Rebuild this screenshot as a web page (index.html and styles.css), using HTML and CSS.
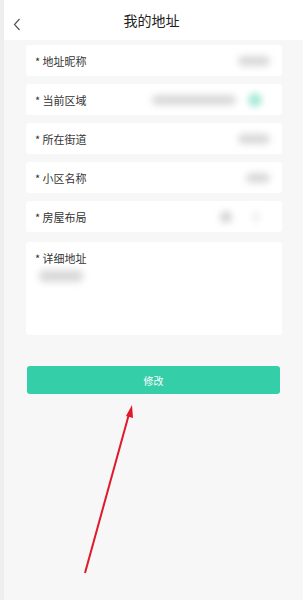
FILE: index.html
```html
<!DOCTYPE html>
<html lang="zh">
 <head>
  <meta charset="utf-8">
  <title>我的地址</title>
  <link rel="stylesheet" href="styles.css">
 </head>
 <body>
  <div id="page">
   <div id="topbar">
    <span class="back">
     <svg width="8" height="13" viewBox="0 0 8 13"><path d="M6.5 1 L1.5 6.5 L6.5 12" fill="none" stroke="#555" stroke-width="1.2"/></svg>
    </span>
    <span class="title">我的地址</span>
   </div>

   <form id="address">
    <div class="row">
     <span class="label">* 地址昵称</span>
     <span class="blob" style="width:32px"></span>
    </div>
    <div class="row">
     <span class="label">* 当前区域</span>
     <span class="blob" style="width:84px"></span>
     <span class="dot"></span>
    </div>
    <div class="row">
     <span class="label">* 所在街道</span>
     <span class="blob" style="width:32px"></span>
    </div>
    <div class="row">
     <span class="label">* 小区名称</span>
     <span class="blob" style="width:24px"></span>
    </div>
    <div class="row layout">
     <span class="label">* 房屋布局</span>
     <span class="blob round"></span>
     <span class="blob faint" style="width:8px"></span>
    </div>
    <div class="row detail">
     <span class="label">* 详细地址</span>
     <span class="blob left" style="width:44px"></span>
    </div>
    <input type="button" class="submit" value="修改">
   </form>

   <svg class="arrow" width="303" height="600" viewBox="0 0 303 600">
    <line x1="85" y1="573" x2="129" y2="414" stroke="#e0182a" stroke-width="2"/>
    <polygon points="132,405 126,416 133,418" fill="#e0182a"/>
   </svg>
  </div>
 </body>
</html>
```

FILE: styles.css
```css
body {
    margin: 0;
    background: #f7f7f7;
    font-family: "Noto Sans CJK SC", "Noto Sans", sans-serif;
    color: #333;
}

#page {
    position: relative;
    min-height: 600px;
    border-left: 4px solid #eeeeee;
    box-sizing: border-box;
    overflow: hidden;
}

#topbar {
    height: 40px;
    background: white;
    display: flex;
    align-items: center;
    justify-content: center;
    position: relative;
}

.back {
    position: absolute;
    left: 9px;
    top: 12px;
}

.title {
    font-size: 14px;
    color: #222;
    margin-left: -4px;
}

#address {
    padding: 5px 21px 0 22px;
    display: flex;
    flex-direction: column;
    gap: 8px;
}

.row {
    height: 31px;
    background: white;
    border-radius: 3px;
    display: flex;
    align-items: center;
    justify-content: flex-end;
    gap: 12px;
    padding: 0 12px 0 9px;
}

.label {
    font-size: 11px;
    margin-right: auto;
}

.blob {
    height: 10px;
    background: #d9d9d9;
    filter: blur(3.5px);
    border-radius: 5px;
}

.blob.round {
    width: 12px;
    height: 12px;
    border-radius: 50%;
    background: #d4d4d4;
}

.blob.faint {
    background: #efefef;
}

.row.layout {
    gap: 20px;
    padding-right: 22px;
}

.dot {
    width: 14px;
    height: 14px;
    border-radius: 50%;
    background: #a9ecd9;
    filter: blur(3px);
    margin-right: 8px;
}

.row.detail {
    height: 93px;
    margin-top: 2px;
    flex-direction: column;
    align-items: flex-start;
    justify-content: flex-start;
    gap: 4px;
    padding-top: 8px;
    box-sizing: border-box;
}

.blob.left {
    height: 12px;
    margin-left: 4px;
}

.submit {
    margin: 23px 2px 0 1px;
    height: 28px;
    border: none;
    border-radius: 3px;
    background: #34cea8;
    color: white;
    font-family: inherit;
    font-size: 10px;
}

.arrow {
    position: absolute;
    left: -4px;
    top: 0;
    pointer-events: none;
}
```
